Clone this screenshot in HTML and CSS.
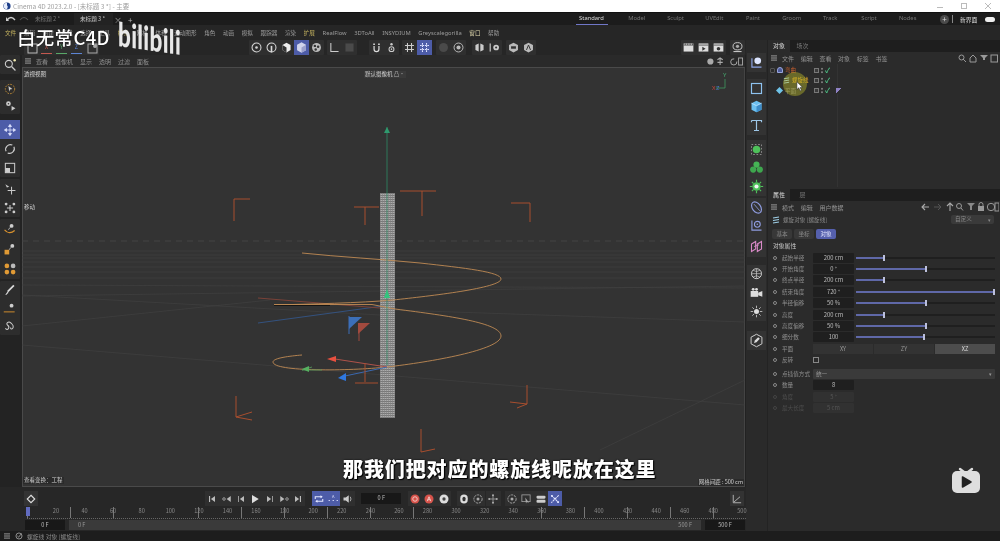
FILE: index.html
```html
<!DOCTYPE html>
<html lang="zh">
<head>
<meta charset="utf-8">
<title>Cinema 4D 2023.2.0</title>
<link rel="stylesheet" href="styles.css">
</head>
<body>
<div class="app">
  <header class="titlebar">
    <svg class="c4d" viewBox="0 0 10 10"><circle cx="5" cy="5" r="4.5" fill="#1d3f8a"/><path d="M5 1a4 4 0 0 0 0 8l1-3-1-2z" fill="#e8eefc"/></svg>
    <span class="title-text">Cinema 4D 2023.2.0 - [未标题 3 *] - 主要</span>
    <span class="winbtns"><i class="w-min"></i><i class="w-max"></i><svg class="w-close" viewBox="0 0 6 6"><path d="M0 0l6 6M6 0L0 6" stroke="#bbb"/></svg></span>
  </header>
  <nav class="tabbar">
    <svg class="undo" viewBox="0 0 24 8"><path d="M2 5q4-5 8 0" fill="none" stroke="#ccc" stroke-width="1.4"/><path d="M1 2v4h3z" fill="#ccc"/><path d="M15 5q4-5 8 0" fill="none" stroke="#555" stroke-width="1.2"/></svg>
    <span class="doc">未标题 2 *</span>
    <span class="doc doc-on">未标题 3 *</span><span class="doc-x">×</span><span class="doc-add">+</span>
    <div class="layouts">
      <span class="lay lay-on">Standard</span><span class="lay">Model</span><span class="lay">Sculpt</span><span class="lay">UVEdit</span><span class="lay">Paint</span><span class="lay">Groom</span><span class="lay">Track</span><span class="lay">Script</span><span class="lay">Nodes</span>
    </div>
    <span class="plus">+</span><span class="vbar"></span><span class="newui">新界面</span><span class="toggle"></span>
  </nav>
  <nav class="menubar">
    <span class="hl">文件</span><span>编辑</span><span>创建</span><span>模式</span><span>选择</span><span>工具</span><span class="hl">样条</span><span>网格</span><span>体积</span><span>运动图形</span><span>角色</span><span>动画</span><span>模拟</span><span>跟踪器</span><span>渲染</span><span class="hl">扩展</span><span class="lt">RealFlow</span><span class="lt">3DToAll</span><span class="lt">INSYDIUM</span><span class="lt">Greyscalegorilla</span><span class="hl2">窗口</span><span>帮助</span>
  </nav>

  <svg class="defs" width="0" height="0">
    <symbol id="ring" viewBox="0 0 16 16"><circle cx="8" cy="8" r="5.5" fill="none" stroke="#d8d8d8" stroke-width="1.3"/><circle cx="8" cy="8" r="1.6" fill="#d8d8d8"/></symbol>
    <symbol id="pill" viewBox="0 0 16 16"><circle cx="8" cy="8" r="5.5" fill="none" stroke="#d8d8d8" stroke-width="1.3"/><rect x="7" y="6" width="2" height="8" fill="#d8d8d8"/></symbol>
    <symbol id="cubeo" viewBox="0 0 16 16"><path d="M3 5l5-3 5 3v6l-5 3-5-3z" fill="#eee"/><path d="M8 8v6l-5-3V5z" fill="#333"/></symbol>
    <symbol id="cube" viewBox="0 0 16 16"><path d="M2.500 4.500L8 1.500l5.500 3v7L8 14.500l-5.500-3z" fill="#d0d4ec"/><path d="M8 8v6.500l5.500-3v-7z" fill="#9aa0cc"/></symbol>
    <symbol id="dots" viewBox="0 0 16 16"><circle cx="8" cy="8" r="5.500" fill="#bbb"/><circle cx="6" cy="6" r="1.500" fill="#333"/><circle cx="10" cy="7" r="1.500" fill="#333"/><circle cx="7" cy="10.500" r="1.500" fill="#333"/></symbol>
    <symbol id="axis" viewBox="0 0 16 16"><path d="M3.500 2.500v10.500h9.500" fill="none" stroke="#ccc" stroke-width="1.300"/></symbol>
    <symbol id="sq" viewBox="0 0 16 16"><rect x="3" y="3" width="10" height="10" fill="#4a4a4a"/></symbol>
    <symbol id="mag" viewBox="0 0 16 16"><path d="M5 6v4a3 3 0 0 0 6 0V6" fill="none" stroke="#ddd" stroke-width="1.500"/><path d="M4 3h2v2H4zM10 3h2v2h-2z" fill="#ddd"/></symbol>
    <symbol id="person" viewBox="0 0 16 16"><circle cx="8" cy="4" r="1.500" fill="#ccc"/><circle cx="8" cy="10" r="3" fill="none" stroke="#ccc" stroke-width="1.300"/><circle cx="8" cy="10" r="1" fill="#ccc"/></symbol>
    <symbol id="hash" viewBox="0 0 16 16"><path d="M5.500 2.500v11M10.500 2.500v11M2.500 5.500h11M2.500 10.500h11" stroke="#ccc" stroke-width="1.300"/></symbol>
    <symbol id="hashb" viewBox="0 0 16 16"><path d="M5.500 2.500v11M10.500 2.500v11M2.500 5.500h11M2.500 10.500h11" stroke="#dfe3ff" stroke-width="1.300" stroke-dasharray="2 1"/></symbol>
    <symbol id="disc" viewBox="0 0 16 16"><circle cx="8" cy="8" r="5.500" fill="#4a4a4a"/></symbol>
    <symbol id="target" viewBox="0 0 16 16"><circle cx="8" cy="8" r="5.500" fill="none" stroke="#bbb" stroke-width="1.200"/><circle cx="8" cy="8" r="2.500" fill="#bbb"/></symbol>
    <symbol id="wing" viewBox="0 0 16 16"><path d="M7 3L3 5v6l4 2zM9 3l4 2v6l-4 2z" fill="#ccc"/></symbol>
    <symbol id="gearbar" viewBox="0 0 16 16"><rect x="2" y="3" width="1.400" height="10" fill="#ccc"/><circle cx="10" cy="8" r="3.500" fill="#ccc"/><circle cx="10" cy="8" r="1.300" fill="#333"/></symbol>
    <symbol id="hex" viewBox="0 0 16 16"><path d="M8 2l5.500 3v6L8 14l-5.500-3V5z" fill="#bbb"/><rect x="5" y="6.500" width="6" height="3" fill="#333"/></symbol>
    <symbol id="hexa" viewBox="0 0 16 16"><path d="M8 2l5.500 3v6L8 14l-5.500-3V5z" fill="#bbb"/><path d="M5.500 11L8 5l2.500 6" fill="none" stroke="#333" stroke-width="1.200"/></symbol>
    <symbol id="clap" viewBox="0 0 16 16"><path d="M2 3h12v10H2z" fill="#ddd"/><path d="M2 5h12" stroke="#444"/><path d="M4 3v2M7 3v2M10 3v2M13 3v2" stroke="#444"/></symbol>
    <symbol id="clapp" viewBox="0 0 16 16"><path d="M2 3h12v10H2z" fill="#ddd"/><path d="M2 5h12" stroke="#444"/><path d="M6.500 7l4 2.500-4 2.500z" fill="#333"/></symbol>
    <symbol id="clapg" viewBox="0 0 16 16"><path d="M2 3h12v10H2z" fill="#ddd"/><path d="M2 5h12" stroke="#444"/><circle cx="8" cy="9.500" r="2.200" fill="#333"/></symbol>
    <symbol id="tea" viewBox="0 0 16 16"><ellipse cx="8" cy="6.500" rx="5.500" ry="4.500" fill="none" stroke="#ccc" stroke-width="1.200"/><circle cx="8" cy="6.500" r="2" fill="#aaa"/><path d="M3 13h10" stroke="#ccc" stroke-width="1.300"/></symbol>
    <symbol id="lball" viewBox="0 0 18 18"><path d="M3.500 4v10.500H15" fill="none" stroke="#8da5e8" stroke-width="1.400"/><circle cx="10.500" cy="7" r="4" fill="#dde6ff"/></symbol>
    <symbol id="rect" viewBox="0 0 18 18"><rect x="3" y="3" width="12" height="12" fill="none" stroke="#8ec3f0" stroke-width="1.400"/></symbol>
    <symbol id="bcube" viewBox="0 0 18 18"><path d="M3 5l6-3 6 3v8l-6 3-6-3z" fill="#6cc0f0"/><path d="M9 8v8l6-3V5z" fill="#3d8cc8"/><path d="M3 5l6 3 6-3" fill="none" stroke="#bfe6ff"/></symbol>
    <symbol id="T" viewBox="0 0 18 18"><path d="M3 3h12v2M3 3v2M9 3v12M6 15h6" fill="none" stroke="#9dc7e8" stroke-width="1.400"/></symbol>
    <symbol id="gsel" viewBox="0 0 18 18"><rect x="3" y="3" width="12" height="12" fill="none" stroke="#999" stroke-dasharray="2 2"/><circle cx="9" cy="9" r="4.500" fill="#4ec15a"/></symbol>
    <symbol id="gcloud" viewBox="0 0 18 18"><circle cx="9" cy="5.500" r="3.700" fill="#45b455"/><circle cx="5" cy="11.500" r="3.700" fill="#3ea64e"/><circle cx="13" cy="11.500" r="3.700" fill="#3ea64e"/></symbol>
    <symbol id="ggear" viewBox="0 0 18 18"><circle cx="9" cy="9" r="5" fill="#4ec15a"/><circle cx="9" cy="9" r="2.500" fill="#f4f4f4"/><path d="M9 1v3M9 14v3M1 9h3M14 9h3M3.500 3.500l2 2M12.500 12.500l2 2M3.500 14.500l2-2M12.500 5.500l2-2" stroke="#4ec15a" stroke-width="1.400"/></symbol>
    <symbol id="ell" viewBox="0 0 18 18"><ellipse cx="9" cy="9" rx="5" ry="7.500" transform="rotate(-35 9 9)" fill="none" stroke="#8f9ce0" stroke-width="1.400"/><path d="M6 5l7 8" stroke="#8f9ce0"/></symbol>
    <symbol id="lgear" viewBox="0 0 18 18"><path d="M3.500 3v11.500H15" fill="none" stroke="#8f9ce0" stroke-width="1.300"/><circle cx="10" cy="7.500" r="3.500" fill="none" stroke="#8f9ce0" stroke-width="1.300"/><circle cx="10" cy="7.500" r="1" fill="#8f9ce0"/></symbol>
    <symbol id="pink" viewBox="0 0 18 18"><path d="M3 6l5-3v9l-5 3zM10 6l5-3v9l-5 3z" fill="none" stroke="#d98ac8" stroke-width="1.300"/><path d="M6 9l6-2" stroke="#d98ac8"/></symbol>
    <symbol id="globe" viewBox="0 0 18 18"><circle cx="9" cy="8" r="6" fill="none" stroke="#ccc" stroke-width="1.200"/><path d="M3 8h12M9 2v12M5 4q4 3 8 0M5 12q4-3 8 0" fill="none" stroke="#ccc" stroke-width=".8"/></symbol>
    <symbol id="cam" viewBox="0 0 18 18"><rect x="2" y="6" width="9" height="7" fill="#ddd"/><path d="M11 8l5-2v7l-5-2z" fill="#ddd"/><circle cx="5" cy="4" r="1.700" fill="#ddd"/><circle cx="9" cy="4" r="1.700" fill="#ddd"/></symbol>
    <symbol id="sun" viewBox="0 0 18 18"><circle cx="9" cy="9" r="3" fill="#ddd"/><path d="M9 2v3M9 13v3M2 9h3M13 9h3M4 4l2 2M12 12l2 2M4 14l2-2M12 6l2-2" stroke="#ccc"/></symbol>
    <symbol id="pen" viewBox="0 0 18 18"><path d="M9 1.500l6.500 3.500v8L9 16.500 2.500 13V5z" fill="none" stroke="#ccc" stroke-width="1.200"/><path d="M6 12l1-3 4-4 2 2-4 4z" fill="#ddd"/></symbol>
    <symbol id="search" viewBox="0 0 18 18"><circle cx="7.500" cy="7.500" r="4.500" fill="none" stroke="#ccc" stroke-width="1.400"/><path d="M11 11l5 5" stroke="#ccc" stroke-width="1.600"/><circle cx="15" cy="3" r="1.600" fill="#f0e8b0"/></symbol>
    <symbol id="live" viewBox="0 0 18 18"><circle cx="9" cy="9" r="6" fill="none" stroke="#c99136" stroke-width="1.200" stroke-dasharray="2 1.500"/><path d="M7 5l5 4-3 .5-1 3z" fill="#ccc"/></symbol>
    <symbol id="gear2" viewBox="0 0 18 18"><circle cx="7" cy="6" r="3" fill="#ccc"/><circle cx="7" cy="6" r="1" fill="#333"/><path d="M11 9l5 3-5 3z" fill="#ccc"/></symbol>
    <symbol id="move" viewBox="0 0 18 18"><path d="M9 2v14M2 9h14M9 2L7 4.500h4zM9 16l-2-2.500h4zM2 9l2.500-2v4zM16 9l-2.500-2v4z" fill="#dfe4ff" stroke="#dfe4ff"/></symbol>
    <symbol id="rot" viewBox="0 0 18 18"><path d="M4 12a6 6 0 0 1 8-8M14 6a6 6 0 0 1-8 8" fill="none" stroke="#ccc" stroke-width="1.400"/></symbol>
    <symbol id="scale" viewBox="0 0 18 18"><rect x="3" y="3" width="12" height="12" fill="none" stroke="#ccc" stroke-width="1.300"/><rect x="3" y="9" width="6" height="6" fill="#ccc"/></symbol>
    <symbol id="amove" viewBox="0 0 18 18"><path d="M3 3l5 3-3 1z" fill="#ccc"/><path d="M11 6v10M6 11h10" stroke="#ccc" stroke-width="1.300"/></symbol>
    <symbol id="scat" viewBox="0 0 18 18"><path d="M9 5v8M5 9h8" stroke="#ccc" stroke-width="1.300"/><circle cx="4" cy="4" r="1.800" fill="#ccc"/><circle cx="14" cy="4" r="1.800" fill="#ccc"/><circle cx="4" cy="14" r="1.800" fill="#ccc"/><circle cx="14" cy="14" r="1.800" fill="#ccc"/></symbol>
    <symbol id="arc" viewBox="0 0 18 18"><path d="M2 10q6 7 13 1" fill="none" stroke="#d8912e" stroke-width="1.500"/><circle cx="11" cy="5" r="2.500" fill="#ccc"/><path d="M9 7l-2 3" stroke="#ccc"/></symbol>
    <symbol id="box" viewBox="0 0 18 18"><rect x="2" y="10" width="6" height="6" fill="#e09a35"/><circle cx="12" cy="5" r="2.500" fill="#ccc"/><path d="M10 7l-2 3" stroke="#ccc"/></symbol>
    <symbol id="four" viewBox="0 0 18 18"><circle cx="5" cy="5" r="3" fill="#e09a35"/><circle cx="13" cy="5" r="3" fill="#bbb"/><circle cx="5" cy="13" r="3" fill="#e09a35"/><circle cx="13" cy="13" r="3" fill="#e09a35"/></symbol>
    <symbol id="brush" viewBox="0 0 18 18"><path d="M14 3L6 11" stroke="#ddd" stroke-width="2.200"/><path d="M6 11l-3 4 1 .5 3-3z" fill="#ddd"/></symbol>
    <symbol id="lineo" viewBox="0 0 18 18"><path d="M1 14h14" stroke="#d8912e" stroke-width="1.200"/><circle cx="11" cy="6" r="2.500" fill="#ccc"/></symbol>
    <symbol id="squig" viewBox="0 0 18 18"><path d="M3 12c4 4 6-2 3-4s1-6 4-3 4 3 3 6-4 2-3 0" fill="none" stroke="#ccc" stroke-width="1.300"/></symbol>
    <symbol id="first" viewBox="0 0 16 16"><path d="M4 4h1.500v8H4zM12 4v8L6.500 8z" fill="#bbb"/></symbol>
    <symbol id="pkey" viewBox="0 0 16 16"><circle cx="4" cy="8" r="1.700" fill="none" stroke="#bbb"/><path d="M13 4v8L7.500 8z" fill="#bbb"/></symbol>
    <symbol id="pf" viewBox="0 0 16 16"><path d="M4 4h1v8H4zM12 4v8L6.500 8z" fill="#bbb"/></symbol>
    <symbol id="play" viewBox="0 0 16 16"><path d="M4 2.500v11L13 8z" fill="#ddd"/></symbol>
    <symbol id="nf" viewBox="0 0 16 16"><path d="M12 4h-1v8h1zM4 4v8l5.500-4z" fill="#bbb"/></symbol>
    <symbol id="nkey" viewBox="0 0 16 16"><circle cx="12" cy="8" r="1.700" fill="none" stroke="#bbb"/><path d="M3 4v8l5.500-4z" fill="#bbb"/></symbol>
    <symbol id="last" viewBox="0 0 16 16"><path d="M12 4h-1.500v8H12zM4 4v8l5.500-4z" fill="#bbb"/></symbol>
    <symbol id="loop" viewBox="0 0 16 16"><path d="M3 8V5h9M13 8v3H4" fill="none" stroke="#e4e7ff" stroke-width="1.400"/><path d="M10 3l3 2-3 2zM6 9l-3 2 3 2z" fill="#e4e7ff"/></symbol>
    <symbol id="spk" viewBox="0 0 16 16"><path d="M2 6h3l4-3v10l-4-3H2z" fill="#ccc"/><path d="M11 5q2 3 0 6" fill="none" stroke="#ccc"/></symbol>
    <symbol id="rec" viewBox="0 0 16 16"><circle cx="8" cy="8" r="6" fill="#d6524a"/><circle cx="8" cy="8" r="3" fill="none" stroke="#f3d0cc" stroke-width="1.200"/></symbol>
    <symbol id="reca" viewBox="0 0 16 16"><circle cx="8" cy="8" r="6" fill="#d6524a"/><path d="M5.500 11L8 5l2.500 6M6.500 9h3" fill="none" stroke="#f8dedb" stroke-width="1.100"/></symbol>
    <symbol id="recg" viewBox="0 0 16 16"><circle cx="8" cy="8" r="6" fill="#ddd"/><circle cx="8" cy="8" r="2.200" fill="#444"/></symbol>
    <symbol id="capsule" viewBox="0 0 16 16"><rect x="3" y="2" width="10" height="12" rx="5" fill="#ddd"/><rect x="6" y="5" width="4" height="6" rx="2" fill="#333"/></symbol>
    <symbol id="ringd" viewBox="0 0 16 16"><circle cx="8" cy="8" r="5.500" fill="none" stroke="#aaa" stroke-width="1.200" stroke-dasharray="3 1"/><circle cx="8" cy="8" r="2" fill="#aaa"/></symbol>
    <symbol id="nodes" viewBox="0 0 16 16"><path d="M8 3v10M3 8h10" stroke="#aaa"/><circle cx="8" cy="3" r="1.400" fill="#aaa"/><circle cx="8" cy="13" r="1.400" fill="#aaa"/><circle cx="3" cy="8" r="1.400" fill="#aaa"/><circle cx="13" cy="8" r="1.400" fill="#aaa"/></symbol>
    <symbol id="sqarrow" viewBox="0 0 16 16"><rect x="2.500" y="2.500" width="11" height="9" fill="none" stroke="#aaa"/><path d="M7 6l5 7-3-1-1 2z" fill="#aaa"/></symbol>
    <symbol id="bars" viewBox="0 0 16 16"><rect x="2" y="3.500" width="12" height="4" rx="1.500" fill="#ccc"/><rect x="2" y="9" width="12" height="4" rx="1.500" fill="#ccc"/></symbol>
    <symbol id="cross" viewBox="0 0 16 16"><path d="M3 3l10 10M13 3L3 13" stroke="#e4e7ff" stroke-width="1.400" stroke-dasharray="3 1"/><circle cx="4" cy="4" r="1.300" fill="#e4e7ff"/><circle cx="12" cy="12" r="1.300" fill="#e4e7ff"/></symbol>
    <symbol id="curve" viewBox="0 0 16 16"><path d="M3 2.500V13h10.500M4 12l8-7" fill="none" stroke="#bbb" stroke-width="1.200"/></symbol>
    <symbol id="burger" viewBox="0 0 12 10"><path d="M1 1.500h10M1 5h10M1 8.500h10" stroke="#c4c4c4" stroke-width="1.200"/></symbol>
    <symbol id="diamond" viewBox="0 0 16 16"><path d="M8 3l5 5-5 5-5-5z" fill="none" stroke="#ddd" stroke-width="1.500"/></symbol>
  </svg>

  <div class="workspace">
    <div class="leftside">
      <div class="toolbar">
        <div class="tgroup"><span class="tb"><svg><rect x="3" y="3" width="9" height="9" fill="none" stroke="#bbb"/></svg></span><span class="axisbtn ax-r">X</span><span class="axisbtn ax-g">Y</span><span class="axisbtn ax-b">Z</span><span class="tb"><svg><rect x="3" y="3" width="9" height="9" fill="none" stroke="#aaa"/><circle cx="10" cy="5" r="2" fill="#aaa"/></svg></span></div>
        <div class="tgroup m-b"><span class="tb"><svg><use href="#ring"/></svg></span><span class="tb"><svg><use href="#pill"/></svg></span><span class="tb"><svg><use href="#cubeo"/></svg></span><span class="tb on"><svg><use href="#cube"/></svg></span><span class="tb"><svg><use href="#dots"/></svg></span></div>
        <div class="tgroup m-3"><span class="tb"><svg><use href="#axis"/></svg></span><span class="tb"><svg><use href="#sq"/></svg></span></div>
        <div class="tgroup m-12"><span class="tb"><svg><use href="#mag"/></svg></span><span class="tb"><svg><use href="#person"/></svg></span></div>
        <div class="tgroup m-3"><span class="tb"><svg><use href="#hash"/></svg></span><span class="tb on"><svg><use href="#hashb"/></svg></span></div>
        <div class="tgroup m-4"><span class="tb"><svg><use href="#disc"/></svg></span><span class="tb"><svg><use href="#target"/></svg></span></div>
        <div class="tgroup m-6"><span class="tb"><svg><use href="#wing"/></svg></span><span class="tb"><svg><use href="#gearbar"/></svg></span></div>
        <div class="tgroup m-4"><span class="tb"><svg><use href="#hex"/></svg></span><span class="tb"><svg><use href="#hexa"/></svg></span></div>
        <div class="tgroup m-d"><span class="tb"><svg><use href="#clap"/></svg></span><span class="tb"><svg><use href="#clapp"/></svg></span><span class="tb"><svg><use href="#clapg"/></svg></span></div>
        <div class="tgroup m-4"><span class="tb"><svg><use href="#tea"/></svg></span></div>
      </div>
      <div class="mainrow">
        <aside class="tools">
          <div class="tool-g g1"><span class="ti"><svg><use href="#search"/></svg></span></div>
          <div class="tool-g g2"><span class="ti"><svg><use href="#live"/></svg></span><span class="ti"><svg><use href="#gear2"/></svg></span></div>
          <div class="tool-g"><span class="ti on"><svg><use href="#move"/></svg></span><span class="ti"><svg><use href="#rot"/></svg></span><span class="ti"><svg><use href="#scale"/></svg></span></div>
          <div class="tool-g"><span class="ti"><svg><use href="#amove"/></svg></span><span class="ti"><svg><use href="#scat"/></svg></span></div>
          <div class="tool-g g5"><span class="ti"><svg><use href="#arc"/></svg></span><span class="ti"><svg><use href="#box"/></svg></span><span class="ti"><svg><use href="#four"/></svg></span></div>
          <div class="tool-g g6"><span class="ti"><svg><use href="#brush"/></svg></span><span class="ti"><svg><use href="#lineo"/></svg></span><span class="ti"><svg><use href="#squig"/></svg></span></div>
        </aside>
        <section class="viewwrap">
          <div class="viewmenu">
            <svg class="burger"><use href="#burger"/></svg>
            <span>查看</span><span>摄像机</span><span>显示</span><span>透明</span><span>过滤</span><span>面板</span>
            <svg class="navicons" viewBox="0 0 42 10"><circle cx="5" cy="5" r="3.500" fill="#aaa"/><path d="M16 1v8M13 3l3-2 3 2M13 6h6" fill="none" stroke="#aaa" stroke-width="1.200"/><path d="M32 2a3.500 3.500 0 1 0 3 3" fill="none" stroke="#aaa" stroke-width="1.100"/><rect x="37" y="1" width="4.500" height="8" fill="none" stroke="#aaa"/></svg>
          </div>
          <div class="viewport">
            <svg class="scene" viewBox="22 67 723 420">
              <defs>
                <pattern id="mesh" width="2" height="2" patternUnits="userSpaceOnUse"><rect width="2" height="2" fill="#787878"/><rect width="2" height="1" fill="#acacac"/><rect width=".6" height="2" fill="#808080"/></pattern>
              </defs>
              <g class="floor">
                <path d="M22 251L745 251M22 255L745 255M22 258L745 258M22 262L745 262M22 267L745 267M22 272L745 272M22 278L745 278M22 285L745 288M22 296L745 286"/>
                <path d="M22 295L380 315M395 310L745 322M22 345L745 405M600 450L745 380M22 326L270 300"/>
              </g>
              <path class="horizon" d="M22 241H745"/>
              <g class="axes-bg">
                <path class="b-line" d="M258 323L383 306"/>
                <path class="r-line" d="M258 298L380 308"/>
              </g>
              <rect x="380" y="193" width="15" height="225" fill="url(#mesh)"/>
              <path class="spline" d="M302 253C340 257 380 259 420 263C465 268 501 272 501 279C501 288 430 296 393 300C360 303 310 304 274 305"/>
              <path class="spline-dark" d="M274 305.500H330"/>
              <path class="spline" d="M274 304.500H372L395 309C450 316 501 323 501 336C501 350 430 362 387 367C350 371 273 372 273 362C273 358 290 356 302 355"/>
              <path class="g-line" d="M387 127V365"/>
              <path class="g-dark" d="M387 127l-3 6h6z"/>
              <path class="g-tip" d="M387 289l-3 9h6z"/>
              <path class="r-line2" d="M387 367L335 359"/>
              <path d="M327 359l9-3v6z" fill="#e8503f"/>
              <path class="gr-line" d="M322 370h-20l10-3"/>
              <path d="M302 369l7-3v6z" fill="#56b060"/>
              <path class="b-line2" d="M387 367L345 376"/>
              <path d="M338 378l8-5v8z" fill="#2f78e0"/>
              <path d="M349 317h13l-13 12z" fill="#3c6fb8"/><path d="M349 316v18" stroke="#3c6fb8"/>
              <path d="M358 323h12l-12 11z" fill="#a24a3e"/><path d="M359 323v18" stroke="#a24a3e"/>
              <g class="brk">
                <path d="M234 221V199H250"/>
                <path d="M354 207H379M365 207V225"/>
                <path d="M400 191L436 191M422 191V216"/>
                <path d="M511 203H530V222"/>
                <path d="M365 363V382M355 383L378 383"/>
                <path d="M236 396V417L252 412M236 417L252 420"/>
                <path d="M527 385V404L510 402M527 404L517 408"/>
                <path d="M421 429V452M421 452L435 449"/>
              </g>
              <path d="M725 79V88H716" fill="none" stroke="#3f9a60" stroke-width=".8"/>
              <text class="ax-y" x="723" y="77">Y</text>
              <text class="ax-x" x="712" y="90">X</text><text class="ax-z" x="716" y="90">Z</text>
            </svg>
            <span class="vp-label vp-l">透视视图</span>
            <span class="vp-label vp-c">默认摄像机 <span class="flag">凸•</span></span>
            <span class="vp-label vp-s">查看变换：工程</span>
            <span class="vp-label vp-g">网格间距 : 500 cm</span>
            <span class="vp-move">移动</span>
          </div>
        </section>
      </div>
      <section class="timeline">
        <div class="tlrow">
          <span class="tc tc-key"><svg><use href="#diamond"/></svg></span>
          <div class="tc-group tc-trans"><span class="tc"><svg><use href="#first"/></svg></span><span class="tc"><svg><use href="#pkey"/></svg></span><span class="tc"><svg><use href="#pf"/></svg></span><span class="tc"><svg><use href="#play"/></svg></span><span class="tc"><svg><use href="#nf"/></svg></span><span class="tc"><svg><use href="#nkey"/></svg></span><span class="tc"><svg><use href="#last"/></svg></span></div>
          <div class="tc-group tc-loop"><span class="tc on"><svg><use href="#loop"/></svg></span><span class="tc on tc-a">A<br>▪▪▪</span><span class="tc"><svg><use href="#spk"/></svg></span></div>
          <span class="curframe">0 F</span>
          <div class="tc-group tc-rec"><span class="tc"><svg><use href="#rec"/></svg></span><span class="tc"><svg><use href="#reca"/></svg></span><span class="tc"><svg><use href="#recg"/></svg></span></div>
          <div class="tc-group tc-cap"><span class="tc"><svg><use href="#capsule"/></svg></span><span class="tc"><svg><use href="#ringd"/></svg></span></div>
          <div class="tc-group tc-node"><span class="tc"><svg><use href="#nodes"/></svg></span></div>
          <div class="tc-group tc-end"><span class="tc"><svg><use href="#ringd"/></svg></span><span class="tc"><svg><use href="#sqarrow"/></svg></span><span class="tc"><svg><use href="#bars"/></svg></span><span class="tc on"><svg><use href="#cross"/></svg></span></div>
          <span class="tc tc-curve"><svg><use href="#curve"/></svg></span>
        </div>
        <div class="ruler">
          <span class="playhead"></span>
          <span>0</span><span>20</span><span>40</span><span>60</span><span>80</span><span>100</span><span>120</span><span>140</span><span>160</span><span>180</span><span>200</span><span>220</span><span>240</span><span>260</span><span>280</span><span>300</span><span>320</span><span>340</span><span>360</span><span>380</span><span>400</span><span>420</span><span>440</span><span>460</span><span>480</span><span>500</span>
        </div>
        <div class="rangerow">
          <span class="rfield">0 F</span>
          <div class="rbar"><span>0 F</span><span>500 F</span></div>
          <span class="rfield">500 F</span>
        </div>
      </section>
    </div>

    <aside class="iconcol">
      <div class="ic-g ig1"><span class="ii"><svg><use href="#lball"/></svg></span></div>
      <div class="ic-g ig2"><span class="ii"><svg><use href="#rect"/></svg></span><span class="ii"><svg><use href="#bcube"/></svg></span><span class="ii"><svg><use href="#T"/></svg></span></div>
      <div class="ic-g ig3"><span class="ii"><svg><use href="#gsel"/></svg></span><span class="ii"><svg><use href="#gcloud"/></svg></span><span class="ii"><svg><use href="#ggear"/></svg></span></div>
      <div class="ic-g ig4"><span class="ii"><svg><use href="#ell"/></svg></span><span class="ii"><svg><use href="#lgear"/></svg></span><span class="ii ii-t"><svg><use href="#pink"/></svg></span></div>
      <div class="ic-g ig5"><span class="ii"><svg><use href="#globe"/></svg></span><span class="ii"><svg><use href="#cam"/></svg></span><span class="ii"><svg><use href="#sun"/></svg></span></div>
      <div class="ic-g ig6"><span class="ii"><svg><use href="#pen"/></svg></span></div>
    </aside>

    <div class="rightside">
      <section class="objmgr">
        <div class="ptabs"><span class="ptab on">对象</span><span class="ptab">场次</span></div>
        <div class="pmenu">
          <svg class="burger"><use href="#burger"/></svg>
          <span>文件</span><span>编辑</span><span>查看</span><span>对象</span><span>标签</span><span>书签</span>
          <svg class="picons" viewBox="0 0 40 9"><circle cx="3.500" cy="3.500" r="2.500" fill="none" stroke="#999"/><path d="M5 5l3 3" stroke="#999"/><path d="M12 8V4l3-3 3 3v4z" fill="none" stroke="#999"/><path d="M22 1h8l-3 3v2h-2V4z" fill="#999"/><rect x="33" y="1" width="6.500" height="7" fill="none" stroke="#999"/></svg>
        </div>
        <div class="objlist">
          <div class="objrow"><span class="expander"></span><span class="oic-bend"></span><span class="oname red">弯曲</span><span class="flags"><i class="chk-box"></i><i class="vdots"></i><i class="tick">✓</i></span></div>
          <div class="objrow ind"><svg class="oic2" viewBox="0 0 8 8"><path d="M1 2l6-1M1 4.500l6-1M1 7l6-1" stroke="#9fd0e8" stroke-width="1.100"/></svg><span class="oname sel">螺旋线</span><span class="flags"><i class="chk-box"></i><i class="vdots"></i><i class="tick">✓</i></span></div>
          <div class="objrow ind2"><svg class="oic2" viewBox="0 0 8 8"><path d="M4 0l4 4-4 4-4-4z" fill="#6fc3e8"/></svg><span class="oname">平面</span><span class="flags"><i class="chk-box"></i><i class="vdots"></i><i class="tick">✓</i><i class="mat"></i></span></div>
        </div>
        <span class="halo"></span>
        <svg class="cursor" viewBox="0 0 8 12"><path d="M1 .5v9l2.200-2 1.500 3.500 1.500-.7L4.700 7H7.500z" fill="#fff" stroke="#222" stroke-width=".6"/></svg>
      </section>
      <section class="attrs">
        <div class="ptabs"><span class="ptab on">属性</span><span class="ptab">层</span></div>
        <div class="pmenu">
          <svg class="burger"><use href="#burger"/></svg>
          <span>模式</span><span>编辑</span><span>用户数据</span>
          <svg class="picons picons2" viewBox="0 0 78 10"><path d="M8 5H1M4 2L1 5l3 3" fill="none" stroke="#aaa" stroke-width="1.100"/><path d="M13 5h7M17 2l3 3-3 3" fill="none" stroke="#555"/><path d="M29 9V2M26 4l3-3 3 3" fill="none" stroke="#aaa" stroke-width="1.100"/><circle cx="38" cy="4" r="2.500" fill="none" stroke="#999"/><path d="M40 6l2 2.500" stroke="#999"/><path d="M46 1h8l-3 3v4h-2V4z" fill="#888"/><rect x="57" y="4" width="6" height="5" fill="#999"/><path d="M58 4V2.500a2 2 0 0 1 4 0V4" fill="none" stroke="#999"/><circle cx="70" cy="5" r="3.700" fill="none" stroke="#999"/><rect x="74" y="1" width="4" height="8" fill="none" stroke="#999"/></svg>
        </div>
        <div class="objname">
          <svg class="oic3" viewBox="0 0 8 8"><path d="M1 2l6-1M1 4.500l6-1M1 7l6-1" stroke="#9fd0e8" stroke-width="1.100"/></svg>
          <span>螺旋对象 [螺旋线]</span>
          <span class="preset">自定义<b>▾</b></span>
        </div>
        <div class="subtabs"><span>基本</span><span>坐标</span><span class="on">对象</span></div>
        <div class="grouphead">对象属性</div>
        <div class="props">
          <div class="prop"><i class="dot"></i><label>起始半径</label><span class="field">200 cm</span><span class="slider"><b style="width:20%"></b></span></div>
          <div class="prop"><i class="dot"></i><label>开始角度</label><span class="field">0 °</span><span class="slider"><b style="width:50%"></b></span></div>
          <div class="prop"><i class="dot"></i><label>终点半径</label><span class="field">200 cm</span><span class="slider"><b style="width:20%"></b></span></div>
          <div class="prop"><i class="dot"></i><label>结束角度</label><span class="field">720 °</span><span class="slider"><b style="width:99.500%"></b></span></div>
          <div class="prop"><i class="dot"></i><label>半径偏移</label><span class="field">50 %</span><span class="slider"><b style="width:50%"></b></span></div>
          <div class="prop"><i class="dot"></i><label>高度</label><span class="field">200 cm</span><span class="slider"><b style="width:20%"></b></span></div>
          <div class="prop"><i class="dot"></i><label>高度偏移</label><span class="field">50 %</span><span class="slider"><b style="width:50%"></b></span></div>
          <div class="prop"><i class="dot"></i><label>细分数</label><span class="field">100</span><span class="slider"><b style="width:49%"></b></span></div>
          <div class="prop"><i class="dot"></i><label>平面</label><span class="segs"><span>XY</span><span>ZY</span><span class="on">XZ</span></span></div>
          <div class="prop"><i class="dot"></i><label>反转</label><i class="checkbox"></i></div>
          <div class="prop prop-sep"><i class="dot"></i><label>点插值方式</label><span class="dropdown">统一<b>▾</b></span></div>
          <div class="prop"><i class="dot"></i><label>数量</label><span class="field">8</span></div>
          <div class="prop off"><i class="dot"></i><label>角度</label><span class="field">5 °</span></div>
          <div class="prop off"><i class="dot"></i><label>最大长度</label><span class="field">5 cm</span></div>
        </div>
      </section>
    </div>
  </div>
  <footer class="statusbar">
    <svg class="burger"><use href="#burger"/></svg>
    <svg class="st-ic" viewBox="0 0 10 10"><circle cx="5" cy="5" r="3.800" fill="none" stroke="#aaa"/><path d="M3 5l1.500 1.500L8 2" fill="none" stroke="#aaa"/></svg>
    <span>螺旋线 对象 [螺旋线]</span>
  </footer>

  <div class="watermark"><span class="wm-name">白无常C4D</span><span class="wm-logo">bilibili</span></div>
  <div class="subtitle">那我们把对应的螺旋线呢放在这里</div>
  <svg class="bililogo" viewBox="0 0 30 30"><path d="M9 4l4 3M21 4l-4 3" stroke="#dedede" stroke-width="2.400" stroke-linecap="round"/><rect x="1" y="6" width="28" height="22" rx="5" fill="#dedede"/><path d="M11.500 12v10l8.500-5z" fill="#222" stroke="#222" stroke-linejoin="round" stroke-width="1.500"/></svg>
</div>
</body>
</html>
```
FILE: styles.css
```css
* { box-sizing: border-box; }
html, body { margin: 0; padding: 0; background: #222; }
body { font-family: "Noto Sans CJK SC", "Noto Sans", sans-serif; color: #a8a8a8; font-size: 5.6px; }
i { font-style: normal; display: inline-block; }
svg { display: block; }
.defs { position: absolute; }

.app { position: relative; width: 1000px; height: 541px; overflow: hidden; display: flex; flex-direction: column; background: #222; filter: blur(.35px); }

.titlebar { height: 13px; flex: none; background: #fff; border-bottom: 1px solid #111; display: flex; align-items: center; padding-left: 3px; color: #a0a0a0; font-size: 6.500px; }
.c4d { width: 8px; height: 8px; margin-right: 2px; }
.winbtns { margin-left: auto; display: flex; align-items: center; gap: 18px; margin-right: 9px; }
.winbtns i { width: 6px; height: 6px; }
.w-min { border-bottom: 1px solid #bbb; height: 3px !important; }
.w-max { border: 1px solid #bbb; }
.w-close { width: 6px; height: 6px; }

.tabbar { height: 12px; flex: none; background: #1c1c1c; display: flex; align-items: center; padding-left: 5px; position: relative; }
.undo { width: 24px; height: 8px; margin-right: 0; }
.doc { width: 45px; padding-left: 6px; color: #777; }
.doc-on { color: #ccc; height: 12px; line-height: 12px; background: #232323; width: 39px; }
.doc-x { color: #999; font-size: 8px; margin-left: 1px; width: 14px; }
.doc-add { color: #bbb; font-size: 8px; }
.layouts { display: flex; margin-left: auto; margin-right: 13px; }
.lay { width: 38.700px; text-align: center; color: #777; font-family: "Noto Sans", sans-serif; font-size: 5.800px; line-height: 10px; height: 12px; }
.lay-on { color: #ddd; border-bottom: 1px solid #7077c8; width: 32px; margin-right: 10px; }
.plus { width: 9px; height: 9px; border-radius: 50%; background: #4a4a4a; color: #ddd; font-size: 8px; line-height: 8px; text-align: center; }
.vbar { width: 1px; height: 8px; background: #888; margin: 0 7px 0 3px; }
.newui { color: #ddd; font-size: 5.800px; width: 25px; }
.toggle { width: 10px; height: 5px; background: #eee; border-radius: 3px; margin-right: 5px; }

.menubar { height: 15px; flex: none; background: #262626; display: flex; align-items: center; gap: 7.600px; padding-left: 5px; color: #9d9d9d; font-size: 5.600px; white-space: nowrap; }
.menubar .hl { color: #c5b35f; }
.menubar .hl2 { color: #e4dcb0; }
.menubar .lt { font-family: "Noto Sans", sans-serif; font-size: 5.800px; }

.workspace { flex: 1; min-height: 0; display: flex; }
.leftside { width: 746px; flex: none; display: flex; flex-direction: column; }

.toolbar { height: 15px; flex: none; display: flex; align-items: center; padding-left: 24px; background: #262626; }
.tgroup { display: flex; background: #2f2f2f; height: 15px; align-items: center; border-radius: 1px; }
.m-b { margin-left: 149.500px; }
.m-3 { margin-left: 3px; }
.m-4 { margin-left: 4px; }
.m-6 { margin-left: 6px; }
.m-12 { margin-left: 12px; }
.m-d { margin-left: 145px; }
.tb { width: 15px; height: 15px; display: flex; align-items: center; justify-content: center; }
.tb svg { width: 13px; height: 13px; }
.tb.on { background: #4d5ca8; }
.axisbtn { width: 15px; text-align: center; font-size: 5.500px; line-height: 12px; height: 13px; color: #999; border-bottom: 1px solid currentColor; margin: 0 2px; flex: 0 0 11px; }
.ax-r { color: #c4584f; }
.ax-g { color: #58a868; }
.ax-b { color: #5c84d4; }

.mainrow { flex: 1; min-height: 0; display: flex; }
.tools { width: 22px; flex: none; background: #232323; display: flex; flex-direction: column; gap: 2px; }
.tool-g { background: #2d2d2d; display: flex; flex-direction: column; width: 20px; border-radius: 1px; }
.g1 { margin-bottom: 4px; }
.g2 { margin-bottom: 4px; }
.g2 .ti { height: 17px; }
.g5 .ti { height: 20px; }
.g6 .ti { height: 18px; }
.ti { height: 19px; display: flex; align-items: center; justify-content: center; }
.ti svg { width: 14px; height: 14px; }
.ti.on { background: #4d5ca8; }

.viewwrap { flex: 1; min-width: 0; display: flex; flex-direction: column; padding-right: 1px; }
.viewmenu { height: 12px; flex: none; display: flex; align-items: center; gap: 7px; padding-left: 2px; color: #8e8e8e; background: #2a2a2a; font-size: 6px; }
.viewmenu .burger { width: 8px; height: 6px; margin-right: -3px; }
.navicons { width: 37px; height: 9px; margin-left: auto; margin-right: 2px; }
.viewport { position: relative; flex: 1; min-height: 0; background: #333; border: 1px solid #4a4a4a; border-right-color: #444; }
.scene { position: absolute; left: -1px; top: -1px; width: 723px; height: 420px; }
.floor path { fill: none; stroke: #414141; stroke-width: .7; }
.horizon { stroke: #454545; stroke-width: 1; stroke-dasharray: 6 5; fill: none; }
.spline { fill: none; stroke: #c08a54; stroke-width: .9; }
.spline-dark { fill: none; stroke: #111; stroke-width: .9; }
.b-line { stroke: #34527f; fill: none; stroke-width: 1; }
.r-line { stroke: #7b4238; fill: none; stroke-width: 1; }
.g-line { stroke: #2f8a66; stroke-width: .8; fill: none; }
.g-dark { fill: #2f9a6e; }
.g-tip { fill: #34c47e; }
.r-line2 { stroke: #b0534a; fill: none; }
.gr-line { stroke: #56a060; fill: none; stroke-width: .8; }
.b-line2 { stroke: #3a68b0; fill: none; }
.brk path { fill: none; stroke: #a84e2e; stroke-width: 1; }
.ax-y { fill: #45a86e; font: 6px "Noto Sans", sans-serif; }
.ax-x { fill: #c4483e; font: 6px "Noto Sans", sans-serif; }
.ax-z { fill: #4878c8; font: 6px "Noto Sans", sans-serif; }
.vp-label { position: absolute; color: #cfcfcf; background: #3a3a3a; line-height: 7px; font-size: 5.500px; padding: 0 1px; }
.vp-l { left: 0; top: 3px; }
.vp-c { left: 341px; top: 3px; }
.flag { color: #aaa; }
.vp-s { left: 0; bottom: 2px; background: #2a2a2a; }
.vp-g { right: 0; bottom: 0; background: #2a2a2a; }
.vp-move { position: absolute; left: 1px; top: 135px; font-size: 5.500px; color: #cfcfcf; }

.timeline { height: 44px; flex: none; background: #272727; display: flex; flex-direction: column; padding-top: 4px; }
.tlrow { height: 15px; display: flex; align-items: center; padding-left: 24px; flex: none; }
.tc { width: 14.300px; height: 15px; display: flex; align-items: center; justify-content: center; }
.tc svg { width: 12px; height: 12px; }
.tc.on { background: #4d5ca8; }
.tc-a { font-size: 4px; line-height: 4.500px; text-align: center; color: #e4e7ff; flex-direction: column; }
.tc-group { display: flex; background: #2f2f2f; }
.tc-key { background: #333; }
.tc-trans { margin-left: 167px; }
.tc-loop { margin-left: 6.500px; }
.curframe { width: 40px; height: 11px; background: #181818; color: #bbb; text-align: center; line-height: 11px; font-size: 5.600px; margin: 0 6.500px; }
.tc-cap { margin-left: 6px; }
.tc-node { margin-left: 1px; }
.tc-end { margin-left: 4.500px; }
.tc-curve { background: #333; margin-left: auto; margin-right: 2px; }
.ruler { height: 13px; flex: none; position: relative; display: flex; margin-left: 27px; color: #888; font-size: 5.600px; line-height: 11px; background-image: repeating-linear-gradient(90deg, #777 0 .8px, transparent .8px 42.870px), repeating-linear-gradient(90deg, #666 0 1px, transparent 1px 2px); background-position: 0 1px, 0 12px; background-size: 100% 11px, 100% 1px; background-repeat: no-repeat; }
.ruler > span { width: 28.580px; flex: none; text-align: center; }
.ruler > span:nth-child(2) { margin-left: -13.900px; }
.playhead { position: absolute; left: -1px; top: 1px; width: 4px !important; height: 9px; background: #626cc0; }
.rangerow { height: 12px; flex: none; display: flex; align-items: center; padding-left: 25px; gap: 4px; padding-right: 1px; }
.rfield { width: 40px; height: 10px; background: #181818; color: #bbb; text-align: center; line-height: 10px; }
.rbar { flex: 1; height: 10px; background: #3a3a3a; display: flex; justify-content: space-between; padding: 0 9px; line-height: 10px; color: #999; }

.iconcol { width: 21px; flex: none; background: #2a2a2a; display: flex; flex-direction: column; padding: 13px 0 0 1px; }
.ic-g { display: flex; flex-direction: column; background: #333; width: 19px; }
.ig2 { margin-top: 7px; }
.ig3 { margin-top: 5px; }
.ig4 { margin-top: 2px; }
.ig5 { margin-top: 8px; }
.ig6 { margin-top: 10px; }
.ii { height: 18.700px; display: flex; align-items: center; justify-content: center; }
.ii-t { height: 22px; }
.ii svg { width: 15px; height: 15px; }

.rightside { flex: 1; min-width: 0; display: flex; flex-direction: column; border-left: 1px solid #232323; background: #2b2b2b; }
.objmgr { height: 147px; flex: none; position: relative; background: linear-gradient(90deg, transparent 69px, #333 69px 70px, transparent 70px); }
.ptabs { height: 12px; display: flex; background: #1e1e1e; }
.ptab { width: 25px; text-align: center; line-height: 12px; color: #777; font-size: 6px; }
.ptab.on { color: #ddd; background: #2b2b2b; width: 22px; }
.pmenu { height: 12px; display: flex; align-items: center; gap: 6.700px; padding-left: 2px; color: #949494; background: #2b2b2b; font-size: 6px; }
.pmenu .burger { width: 8px; height: 6px; margin-right: -2.700px; }
.picons { width: 40px; height: 9px; margin-left: auto; margin-right: 2px; }
.picons2 { width: 78px; height: 10px; margin-right: 1px; }
.objlist { display: flex; flex-direction: column; padding-top: 1px; }
.objrow { height: 10.300px; display: flex; align-items: center; padding-left: 2px; position: relative; }
.ind { padding-left: 15px; }
.ind2 { padding-left: 8px; }
.expander { width: 5px; height: 5px; border: 1px solid #555; border-radius: 1px; margin-right: 2px; }
.oic-bend { width: 6px; height: 6px; border-radius: 3px 3px 0 0; background: #4d5c9a; border: 1px solid #9aa6dd; margin-right: 2px; }
.oic2 { width: 7px; height: 7px; margin-right: 2px; }
.oname { color: #888; font-size: 5.500px; }
.oname.red { color: #c15d2f; }
.oname.sel { color: #e2a628; }
.flags { position: absolute; left: 46px; display: flex; align-items: center; gap: 2px; }
.chk-box { width: 5px; height: 5px; border: 1px solid #777; background: #3a3a3a; }
.vdots { width: 2px; height: 7px; background: radial-gradient(circle, #777 1px, transparent 1px) 0 0 / 2px 3.500px; }
.tick { color: #4ec98a; font-size: 7px; line-height: 7px; font-weight: 700; }
.mat { width: 6px; height: 6px; margin-left: 4px; background: linear-gradient(135deg, #8f82c4 50%, #2b2b2b 50%); }
.halo { position: absolute; left: 15px; top: 32px; width: 24px; height: 24px; border-radius: 50%; background: rgba(190, 190, 40, .42); }
.cursor { position: absolute; left: 28px; top: 41px; width: 7px; height: 11px; }

.attrs { flex: 1; min-height: 0; display: flex; flex-direction: column; }
.attrs .ptabs { margin-top: 2px; }
.objname { height: 13px; margin-bottom: 2px; display: flex; align-items: center; padding-left: 4px; gap: 3px; color: #888; }
.oic3 { width: 8px; height: 8px; }
.preset { margin-left: auto; margin-right: 6px; width: 43px; height: 9px; background: #3a3a3a; border-radius: 2px; padding-left: 4px; line-height: 9px; display: flex; justify-content: space-between; padding-right: 3px; color: #888; }
.preset b, .dropdown b { font-weight: 400; font-size: 5px; }
.subtabs { height: 11px; display: flex; gap: 1px; padding-left: 4px; align-items: center; }
.subtabs span { width: 20px; height: 10px; line-height: 10px; background: #383838; text-align: center; border-radius: 2px; color: #888; }
.subtabs .on { background: #5560ad; color: #e4e7ff; }
.subtabs span + span { margin-left: 1px; }
.grouphead { height: 13px; line-height: 13px; padding-left: 5px; color: #ccc; font-size: 5.800px; }
.props { display: flex; flex-direction: column; }
.prop { height: 11.400px; display: grid; grid-template-columns: 11px 31px 41px 1fr; align-items: center; padding-left: 3px; padding-right: 5px; }
.dot { width: 4px; height: 4px; border: 1px solid #8a8a8a; border-radius: 50%; margin-left: 2px; }
.prop label { color: #8e8e8e; font-size: 5.600px; white-space: nowrap; }
.field { height: 10px; background: #1f1f1f; text-align: center; line-height: 10px; color: #bbb; border-radius: 1px; font-size: 5.800px; }
.slider { height: 2px; margin-left: 2px; background: #1f1f1f; position: relative; display: block; }
.slider b { display: block; height: 2px; background: #5f68a8; position: relative; }
.slider b::after { content: ""; position: absolute; right: -1px; top: -2px; width: 2px; height: 6px; background: #bcc0dc; }
.segs { grid-column: 3 / 5; display: flex; height: 10px; gap: 1px; }
.segs span { flex: 1; background: #333; text-align: center; line-height: 10px; color: #999; }
.segs .on { background: #4d4d4d; color: #ddd; }
.checkbox { width: 6px; height: 6px; border: 1px solid #888; background: #2b2b2b; }
.prop-sep { margin-top: 2.500px; }
.dropdown { grid-column: 3 / 5; height: 10px; background: #3a3a3a; line-height: 10px; padding: 0 3px; display: flex; justify-content: space-between; color: #999; border-radius: 1px; }
.off label { color: #4d4d4d; }
.off .field { background: #313131; color: #555; }
.off .dot { border-color: #444; }

.statusbar { height: 10px; flex: none; background: #1d1d1d; display: flex; align-items: center; padding-left: 3px; gap: 4px; color: #8a8a8a; font-size: 5.800px; }
.statusbar .burger { width: 8px; height: 6px; }
.st-ic { width: 8px; height: 8px; }

.watermark { position: absolute; left: 17px; top: 16px; display: flex; align-items: center; color: #fff; white-space: nowrap; }
.wm-name { font-size: 18.500px; font-weight: 500; letter-spacing: .3px; line-height: 24px; margin-top: 7px; text-shadow: 0 0 1px #000; }
.wm-logo { font-family: "Lato", sans-serif; font-weight: 900; font-size: 33px; line-height: 34px; margin-left: 8px; letter-spacing: .5px; transform: skewY(8deg) scaleX(.68); transform-origin: left center; color: #e8e8e8; }
.subtitle { position: absolute; left: 343px; top: 456px; font-size: 20px; line-height: 26px; letter-spacing: .9px; font-weight: 900; color: #fff; white-space: nowrap; text-shadow: 0 0 2px #000, 1px 1px 1px #000; }
.bililogo { position: absolute; left: 951px; top: 465px; width: 30px; height: 30px; }
```
